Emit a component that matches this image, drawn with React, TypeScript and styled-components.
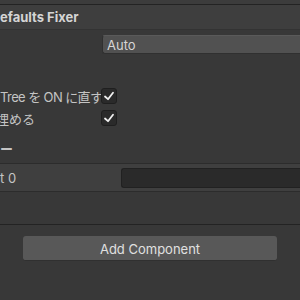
import React from "react";
import styled, { createGlobalStyle } from "styled-components";

const GlobalStyle = createGlobalStyle`
  html, body {
    margin: 0;
    padding: 0;
    background: #383838;
  }
  body {
    width: 300px;
    height: 300px;
    overflow: hidden;
    font-family: Inter, "Noto Sans CJK JP", sans-serif;
  }
`;

const Inspector = styled.div`
  width: 300px;
  height: 300px;
  overflow: hidden;
  background: #383838;
  color: #c4c4c4;
  font-size: 13px;
  display: flex;
  flex-direction: column;
`;

const TopStrip = styled.div`
  flex: none;
  height: 4px;
  background: #3c3c3c;
  border-bottom: 1px solid #232323;
`;

const Header = styled.div`
  flex: none;
  height: 24px;
  display: flex;
  align-items: center;
  background: #3e3e3e;
  border-bottom: 1px solid #333333;
  font-weight: 700;
  color: #d4d4d4;
  white-space: nowrap;
`;

const Row = styled.div<{ $h: number; $top?: number }>`
  flex: none;
  height: ${(p) => p.$h}px;
  margin-top: ${(p) => p.$top ?? 0}px;
  display: grid;
  grid-template-columns: 101px 1fr;
  align-items: center;
`;

const Label = styled.div<{ $shift?: number; $bold?: boolean; $tight?: boolean }>`
  white-space: nowrap;
  overflow: hidden;
  margin-left: ${(p) => -(p.$shift ?? 0)}px;
  font-weight: ${(p) => (p.$bold ? 700 : 400)};
  letter-spacing: ${(p) => (p.$tight ? "-0.6px" : "normal")};
`;

const Dropdown = styled.div`
  height: 19px;
  margin-left: 1px;
  box-sizing: border-box;
  display: flex;
  align-items: center;
  padding-left: 4px;
  background: #515151;
  border: 1px solid #303030;
  border-top-color: #5a5a5a;
  border-right: none;
  border-radius: 3px 0 0 3px;
  color: #d6d6d6;
`;

const Checkbox = styled.div`
  width: 14px;
  height: 14px;
  background: #2a2a2a;
  border: 1px solid #1f1f1f;
  border-radius: 3px;
  display: flex;
  align-items: center;
  justify-content: center;
`;

const ListBand = styled.div`
  flex: none;
  height: 27px;
  margin-top: 6px;
  background: #3f3f3f;
  border-top: 1px solid #2c2c2c;
  border-bottom: 1px solid #2c2c2c;
  display: grid;
  grid-template-columns: 121px 1fr;
  align-items: center;
`;

const ObjectField = styled.div`
  height: 20px;
  box-sizing: border-box;
  background: #2a2a2a;
  border: 1px solid #212121;
  border-right: none;
  border-radius: 3px 0 0 3px;
`;

const Separator = styled.div`
  flex: none;
  height: 1px;
  margin-top: 32px;
  background: #232323;
`;

const AddButton = styled.div`
  flex: none;
  height: 25px;
  margin: 11px 23px 0 23px;
  padding-top: 2px;
  box-sizing: border-box;
  background: #585858;
  border-bottom: 1px solid #303030;
  border-radius: 3px;
  display: flex;
  align-items: center;
  justify-content: center;
  color: #e0e0e0;
`;

const Check = () => (
  <svg width="12" height="12" viewBox="0 0 12 12">
    <polyline
      points="2,6.5 5,9.2 10,2.8"
      fill="none"
      stroke="#f0f0f0"
      strokeWidth="1.8"
      strokeLinecap="round"
      strokeLinejoin="round"
    />
  </svg>
);

export default function App() {
  return (
    <>
      <GlobalStyle />
      <Inspector>
        <TopStrip />
        <Header>efaults Fixer</Header>
        <Row $h={19} $top={5}>
          <Label />
          <Dropdown>Auto</Dropdown>
        </Row>
        <Row $h={33} />
        <Row $h={18}>
          <Label $tight>Tree を ON に直す</Label>
          <Checkbox>
            <Check />
          </Checkbox>
        </Row>
        <Row $h={18} $top={4}>
          <Label $shift={4}>埋める</Label>
          <Checkbox>
            <Check />
          </Checkbox>
        </Row>
        <Row $h={18} $top={12}>
          <Label $bold>ー</Label>
        </Row>
        <ListBand>
          <Label>t 0</Label>
          <ObjectField />
        </ListBand>
        <Separator />
        <AddButton>Add Component</AddButton>
      </Inspector>
    </>
  );
}
